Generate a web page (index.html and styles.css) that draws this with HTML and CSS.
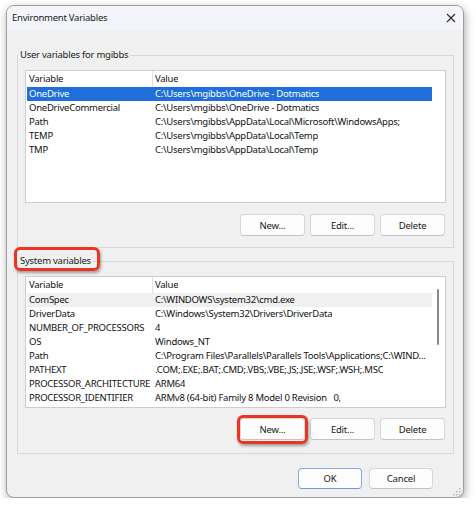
FILE: index.html
```html
<!DOCTYPE html>
<html lang="en">
<head>
<meta charset="utf-8">
<title>Environment Variables</title>
<link rel="stylesheet" href="styles.css">
</head>
<body>
<div class="window">
  <div class="titlebar">
    <span class="title">Environment Variables</span>
    <svg class="close" width="10" height="10" viewBox="0 0 10 10"><path d="M1 1 L9 9 M9 1 L1 9" stroke="#2b2b2b" stroke-width="1.1" fill="none"/></svg>
  </div>
  <div class="content">
    <fieldset class="group group-user">
      <legend>User variables for mgibbs</legend>
      <div class="list list-user">
        <div class="rows">
          <div class="row head"><span class="c1">Variable</span><span class="c2">Value</span></div>
          <div class="row selected"><span class="c1">OneDrive</span><span class="c2">C:\Users\mgibbs\OneDrive - Dotmatics</span></div>
          <div class="row"><span class="c1">OneDriveCommercial</span><span class="c2">C:\Users\mgibbs\OneDrive - Dotmatics</span></div>
          <div class="row"><span class="c1">Path</span><span class="c2">C:\Users\mgibbs\AppData\Local\Microsoft\WindowsApps;</span></div>
          <div class="row"><span class="c1">TEMP</span><span class="c2">C:\Users\mgibbs\AppData\Local\Temp</span></div>
          <div class="row"><span class="c1">TMP</span><span class="c2">C:\Users\mgibbs\AppData\Local\Temp</span></div>
        </div>
        <div class="scroll"></div>
      </div>
      <div class="buttons">
        <button class="btn">New...</button>
        <button class="btn">Edit...</button>
        <button class="btn">Delete</button>
      </div>
    </fieldset>

    <fieldset class="group group-system">
      <legend class="callout callout-legend">System variables</legend>
      <div class="list list-system">
        <div class="rows">
          <div class="row head"><span class="c1">Variable</span><span class="c2">Value</span></div>
          <div class="row focused"><span class="c1">ComSpec</span><span class="c2">C:\WINDOWS\system32\cmd.exe</span></div>
          <div class="row"><span class="c1">DriverData</span><span class="c2">C:\Windows\System32\Drivers\DriverData</span></div>
          <div class="row"><span class="c1">NUMBER_OF_PROCESSORS</span><span class="c2">4</span></div>
          <div class="row"><span class="c1">OS</span><span class="c2">Windows_NT</span></div>
          <div class="row"><span class="c1">Path</span><span class="c2">C:\Program Files\Parallels\Parallels Tools\Applications;C:\WIND...</span></div>
          <div class="row"><span class="c1">PATHEXT</span><span class="c2">.COM;.EXE;.BAT;.CMD;.VBS;.VBE;.JS;.JSE;.WSF;.WSH;.MSC</span></div>
          <div class="row"><span class="c1">PROCESSOR_ARCHITECTURE</span><span class="c2">ARM64</span></div>
          <div class="row"><span class="c1">PROCESSOR_IDENTIFIER</span><span class="c2">ARMv8 (64-bit) Family 8 Model 0 Revision   0,</span></div>
        </div>
        <div class="scroll"><div class="thumb"></div></div>
      </div>
      <div class="buttons buttons-system">
        <button class="btn callout callout-button">New...</button>
        <button class="btn">Edit...</button>
        <button class="btn">Delete</button>
      </div>
    </fieldset>

    <div class="footer">
      <button class="btn btn-default">OK</button>
      <button class="btn">Cancel</button>
    </div>
  </div>
  <svg class="grip" width="8" height="8" viewBox="0 0 8 8">
    <rect x="6" y="0" width="1.5" height="1.5" fill="#b9b9b9"/>
    <rect x="3" y="3" width="1.5" height="1.5" fill="#b9b9b9"/>
    <rect x="6" y="3" width="1.5" height="1.5" fill="#b9b9b9"/>
    <rect x="0" y="6" width="1.5" height="1.5" fill="#b9b9b9"/>
    <rect x="3" y="6" width="1.5" height="1.5" fill="#b9b9b9"/>
    <rect x="6" y="6" width="1.5" height="1.5" fill="#b9b9b9"/>
  </svg>
</div>
</body>
</html>
```

FILE: styles.css
```css
html, body {
  margin: 0;
  background: #ffffff;
}

body {
  font-family: "Noto Sans", "Open Sans", sans-serif;
  font-size: 9.5px;
  letter-spacing: -0.25px;
  color: #111;
}

/* dialog frame */
.window {
  position: relative;
  box-sizing: border-box;
  width: 458px;
  height: 493px;
  margin: 5px 0 0 6px;
  border: 1px solid #9d9d9d;
  border-radius: 8px;
  background: #f0f0f0;
  box-shadow: 1px 3px 8px rgba(0, 0, 0, 0.35);
  overflow: hidden;
  display: flex;
  flex-direction: column;
}

.titlebar {
  height: 23px;
  flex: none;
  background: #f3f5fa;
  display: flex;
  align-items: center;
  justify-content: space-between;
  padding: 0 7px 1px 5px;
}

.title {
  font-size: 9.5px;
  color: #1a1a1a;
}

.close {
  display: block;
}

.content {
  padding: 0 9px 0 10px;
  display: flex;
  flex-direction: column;
}

/* group boxes */
.group {
  margin: 17px 0 0;
  padding: 7px 7px 11px;
  border: 1px solid #d9d9d9;
  min-width: 0;
}

.group-system {
  margin-top: 5px;
  padding-bottom: 13px;
}

.group legend {
  margin-left: -7px;
  padding: 0 2px;
  line-height: 16px;
  font-size: 9.5px;
  color: #1a1a1a;
}

/* list views */
.list {
  box-sizing: border-box;
  height: 133px;
  border: 1px solid #cdcdcd;
  background: #fff;
  padding-left: 1px;
  display: flex;
}

.list-system {
  height: 132px;
}

.rows {
  width: 405px;
  flex: none;
}

.row {
  display: flex;
  height: 14px;
  line-height: 14px;
  white-space: pre;
  overflow: hidden;
}

.row.head {
  height: 16px;
  line-height: 16px;
}

.c1 {
  box-sizing: border-box;
  width: 126px;
  flex: none;
  padding-left: 2px;
  overflow: hidden;
}

.c2 {
  padding-left: 2px;
  overflow: hidden;
}

.head .c1 {
  border-right: 1px solid #e3e3e3;
}

.row.selected {
  background: #1f6fdb;
  color: #fff;
}

.row.focused {
  background: #f0f0f0;
}

.scroll {
  flex: 1;
  position: relative;
}

.thumb {
  width: 2px;
  height: 56px;
  margin: 12px 0 0 5px;
  border-radius: 1px;
  background: #8a8a8a;
}

/* push buttons */
.buttons {
  display: flex;
  justify-content: flex-end;
  gap: 5px;
  margin-top: 11px;
  padding-right: 1px;
}

.buttons-system {
  margin-top: 10px;
}

.btn {
  box-sizing: border-box;
  width: 65px;
  height: 22px;
  padding: 0;
  font: inherit;
  font-size: 9.5px;
  letter-spacing: -0.2px;
  color: #1a1a1a;
  background: #fdfdfd;
  border: 1px solid #d6d6d6;
  border-bottom-color: #c4c4c4;
  border-radius: 4px;
}

.footer {
  display: flex;
  justify-content: flex-end;
  gap: 7px;
  margin-top: 14px;
  padding-right: 21px;
}

.footer .btn {
  width: 64px;
  height: 21px;
}

.btn-default {
  border-color: #85aae6;
  border-bottom-color: #6f98dc;
}

/* red annotation rings */
.callout {
  position: relative;
}

.callout::after {
  content: "";
  position: absolute;
  border: 3px solid #ea3524;
  border-radius: 6px;
  box-shadow: 1px 2px 3px rgba(0, 0, 0, 0.35);
  pointer-events: none;
}

.callout-legend::after {
  top: -6px;
  bottom: -2px;
  left: -4px;
  right: -7px;
}

.callout-button::after {
  top: -4px;
  bottom: -5px;
  left: -4px;
  right: -4px;
}

.grip {
  position: absolute;
  right: 2px;
  bottom: 1px;
}
```
